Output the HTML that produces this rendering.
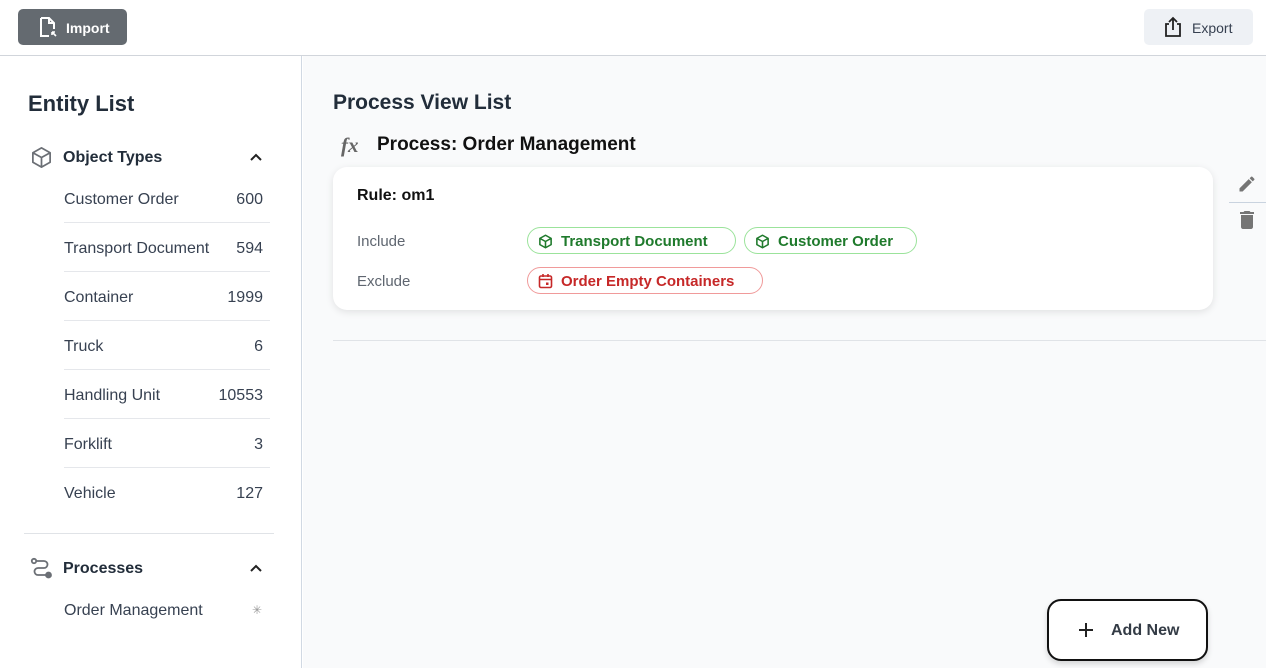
<!DOCTYPE html>
<html><head><meta charset="utf-8"><style>
*{box-sizing:border-box;margin:0;padding:0}
body{width:1266px;height:668px;overflow:hidden;font-family:"Liberation Sans",sans-serif;background:#fff;position:relative;color:#1f2937}
.abs{position:absolute}
.hdr{left:0;top:0;width:1266px;height:56px;border-bottom:1px solid #d1d5db;background:#fff}
.imp{left:18px;top:9px;width:109px;height:36px;background:#646a70;border-radius:5px;color:#fff;font-weight:bold;font-size:14px}
.exp{left:1144px;top:9px;width:109px;height:36px;background:#eef1f5;border-radius:5px;color:#374151;font-size:14px}
.side{left:0;top:56px;width:302px;height:612px;border-right:1px solid #d1d9e3;background:#fff}
.main{left:303px;top:56px;width:963px;height:612px;background:#f9fafb}
.row{position:absolute;left:64px;width:206px;height:49px;line-height:52px;font-size:16px;color:#374151;border-bottom:1px solid #e5e7eb}
.row .n{position:absolute;right:7px;top:0}
.pill{position:absolute;height:27px;border-radius:14px;font-weight:bold;font-size:15px;padding-left:33px;line-height:28px}
.g{border:1px solid #9be39b;color:#1f7a2c;background:#fff}
.r{border:1px solid #f09a9a;color:#c62828;background:#fff}
</style></head><body>
<div class="abs hdr"></div>
<div class="abs imp">
<svg class="abs" style="left:19px;top:7px" width="22" height="22" viewBox="0 0 22 22" fill="none" stroke="#fff" stroke-width="2"><path d="M4 2h8l5 5v6M4 2v18h8M12 2v5h5"/><path d="M15 16l4 4M15 16v3M15 16h3" stroke-width="1.6"/></svg>
<span class="abs" style="left:48px;top:11px">Import</span></div>
<div class="abs exp">
<svg class="abs" style="left:18px;top:7px" width="22" height="22" viewBox="0 0 22 22" fill="none" stroke="#222" stroke-width="1.8"><path d="M7 8H4v12h14V8h-3M11 2v12M7 6l4-4 4 4"/></svg>
<span class="abs" style="left:48px;top:11px">Export</span></div>
<div class="abs side">
<div class="abs" style="left:28px;top:35px;font-size:22px;font-weight:bold;color:#222d3a">Entity List</div>
<svg class="abs" style="left:30px;top:90px" width="23" height="23" viewBox="0 0 24 24" fill="none" stroke="#6b6f75" stroke-width="1.8" stroke-linejoin="round"><path d="M12 2l9 5v10l-9 5-9-5V7z M3 7l9 5 9-5 M12 12v10"/></svg>
<div class="abs" style="left:63px;top:93px;font-size:16px;font-weight:bold;color:#222d3a">Object Types</div>
<svg class="abs" style="left:249px;top:96px" width="14" height="10" viewBox="0 0 14 10" fill="none" stroke="#222" stroke-width="2"><path d="M2 8l5-5 5 5"/></svg>
<div class="row" style="top:118px">Customer Order<span class="n">600</span></div>
<div class="row" style="top:167px">Transport Document<span class="n">594</span></div>
<div class="row" style="top:216px">Container<span class="n">1999</span></div>
<div class="row" style="top:265px">Truck<span class="n">6</span></div>
<div class="row" style="top:314px">Handling Unit<span class="n">10553</span></div>
<div class="row" style="top:363px">Forklift<span class="n">3</span></div>
<div class="row" style="top:412px;border:none">Vehicle<span class="n">127</span></div>
<div class="abs" style="left:24px;top:477px;width:250px;height:1px;background:#e0e3e7"></div>
<svg class="abs" style="left:30px;top:501px" width="24" height="22" viewBox="0 0 24 22" fill="none" stroke="#6b6f75" stroke-width="1.8"><circle cx="4" cy="4" r="2.2"/><path d="M6 4h8a3.5 3.5 0 0 1 0 7H8a3.5 3.5 0 0 0 0 7h8"/><circle cx="18.5" cy="18" r="2.5" fill="#6b6f75"/></svg>
<div class="abs" style="left:63px;top:504px;font-size:16px;font-weight:bold;color:#222d3a">Processes</div>
<svg class="abs" style="left:249px;top:507px" width="14" height="10" viewBox="0 0 14 10" fill="none" stroke="#222" stroke-width="2"><path d="M2 8l5-5 5 5"/></svg>
<div class="abs" style="left:64px;top:546px;font-size:16px;color:#374151">Order Management</div>
<div class="abs" style="left:252px;top:547px;font-size:12px;color:#999">✳</div>
</div>
<div class="abs main">
<div class="abs" style="left:30px;top:35px;font-size:21px;font-weight:bold;color:#222d3a">Process View List</div>
<div class="abs" style="left:38px;top:77px;font-size:21px;font-style:italic;font-weight:bold;font-family:'Liberation Serif',serif;color:#666">fx</div>
<div class="abs" style="left:74px;top:78px;font-size:19px;color:#111;font-weight:bold">Process: Order Management</div>
<div class="abs" style="left:30px;top:111px;width:880px;height:143px;background:#fff;border-radius:14px;box-shadow:0 2px 8px rgba(0,0,0,.1)">
<div class="abs" style="left:24px;top:20px;font-size:16px;font-weight:bold;color:#111">Rule: om1</div>
<div class="abs" style="left:24px;top:66px;font-size:15px;color:#5f6670">Include</div>
<div class="abs" style="left:24px;top:106px;font-size:15px;color:#5f6670">Exclude</div>
<div class="pill g" style="left:194px;top:60px;width:209px"><svg class="abs" style="left:10px;top:6px" width="15" height="15" viewBox="0 0 24 24" fill="none" stroke="#1f7a2c" stroke-width="2.5" stroke-linejoin="round"><path d="M12 2l9 5v10l-9 5-9-5V7z M3 7l9 5 9-5 M12 12v10"/></svg>Transport Document</div>
<div class="pill g" style="left:411px;top:60px;width:173px"><svg class="abs" style="left:10px;top:6px" width="15" height="15" viewBox="0 0 24 24" fill="none" stroke="#1f7a2c" stroke-width="2.5" stroke-linejoin="round"><path d="M12 2l9 5v10l-9 5-9-5V7z M3 7l9 5 9-5 M12 12v10"/></svg>Customer Order</div>
<div class="pill r" style="left:194px;top:100px;width:236px"><svg class="abs" style="left:10px;top:5px" width="15" height="16" viewBox="0 0 15 16" fill="none" stroke="#c62828" stroke-width="1.6"><rect x="1.5" y="3" width="12" height="11.5" rx="1.5"/><path d="M1.5 6.5h12M5 1v3M10 1v3"/><rect x="8" y="9.5" width="2.5" height="2.5" fill="#c62828" stroke="none"/></svg>Order Empty Containers</div>
</div>
<svg class="abs" style="left:934px;top:118px" width="20" height="20" viewBox="0 0 24 24"><path fill="#757575" d="M3 17.25V21h3.75L17.81 9.94l-3.75-3.75L3 17.25zM20.71 7.04a1 1 0 0 0 0-1.41l-2.34-2.34a1 1 0 0 0-1.410 0l-1.83 1.83 3.75 3.75 1.83-1.83z"/></svg>
<div class="abs" style="left:926px;top:146px;width:37px;height:1px;background:#c9d3df"></div>
<svg class="abs" style="left:932px;top:152px" width="24" height="24" viewBox="0 0 24 24"><path fill="#757575" d="M6 19c0 1.1.9 2 2 2h8c1.1 0 2-.9 2-2V7H6v12zM19 4h-3.5l-1-1h-5l-1 1H5v2h14V4z"/></svg>
<div class="abs" style="left:30px;top:284px;width:933px;height:1px;background:#e0e3e7"></div>
<div class="abs" style="left:744px;top:543px;width:161px;height:62px;border:2px solid #111;border-radius:14px;background:#fff;box-shadow:0 3px 6px rgba(0,0,0,.15)">
<svg class="abs" style="left:29px;top:21px" width="16" height="16" viewBox="0 0 16 16" stroke="#222" stroke-width="2"><path d="M8 1v14M1 8h14"/></svg>
<span class="abs" style="left:62px;top:21px;font-size:16px;font-weight:bold;color:#333b45">Add New</span></div>
</div>
</body></html>
